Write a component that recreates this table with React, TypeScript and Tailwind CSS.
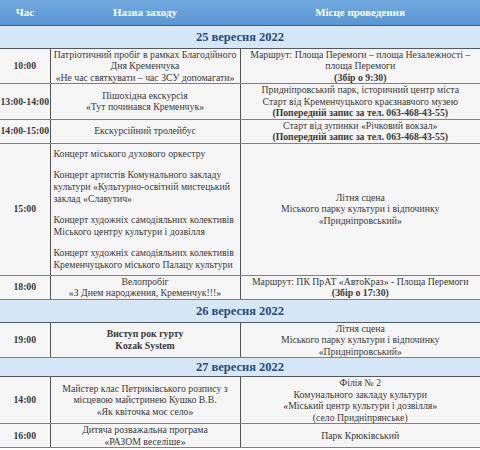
import React from "react";

type Line = string | { b: string };

interface EventRow {
  time: string;
  name: React.ReactNode;
  place: Line[];
  left?: boolean;
}

interface DayBlock {
  date: string;
  h: string;
  rows: EventRow[];
}

function Lines({ lines }: { lines: Line[] }) {
  return (
    <>
      {lines.map((l, i) =>
        typeof l === "string" ? (
          <div key={i}>{l}</div>
        ) : (
          <div key={i} className="font-bold">
            {l.b}
          </div>
        )
      )}
    </>
  );
}

const phone = { b: "(Попередній запис за тел. 063-468-43-55)" };
const summerStage = ["Літня сцена", "Міського парку культури і відпочинку", "«Придніпровський»"];

const days: DayBlock[] = [
  {
    date: "25 вересня 2022",
    h: "h-[23px]",
    rows: [
      {
        time: "10:00",
        name: (
          <Lines
            lines={[
              "Патріотичний пробіг в рамках Благодійного",
              "Дня Кременчука",
              "«Не час святкувати – час ЗСУ допомагати»",
            ]}
          />
        ),
        place: ["Маршрут: Площа Перемоги – площа Незалежності –", "площа Перемоги", { b: "(Збір о 9:30)" }],
      },
      {
        time: "13:00-14:00",
        name: <Lines lines={["Пішохідна екскурсія", "«Тут починався Кременчук»"]} />,
        place: [
          "Придніпровський парк, історичний центр міста",
          "Старт від Кременчуцького краєзнавчого музею",
          phone,
        ],
      },
      {
        time: "14:00-15:00",
        name: <Lines lines={["Екскурсійний тролейбус"]} />,
        place: ["Старт від зупинки «Річковий вокзал»", phone],
      },
      {
        time: "15:00",
        left: true,
        name: (
          <div className="flex flex-col gap-[9px] py-[4px] leading-[12px]">
            <div>Концерт міського духового оркестру</div>
            <div>
              <div>Концерт артистів Комунального закладу</div>
              <div>культури «Культурно-освітній мистецький</div>
              <div>заклад «Славутич»</div>
            </div>
            <div>
              <div>Концерт художніх самодіяльних колективів</div>
              <div>Міського центру культури і дозвілля</div>
            </div>
            <div>
              <div>Концерт художніх самодіяльних колективів</div>
              <div>Кременчуцького міського Палацу культури</div>
            </div>
          </div>
        ),
        place: summerStage,
      },
      {
        time: "18:00",
        name: <Lines lines={["Велопробіг", "«З Днем народження, Кременчук!!!»"]} />,
        place: ["Маршрут: ПК ПрАТ «АвтоКраз» - Площа Перемоги", { b: "(Збір о 17:30)" }],
      },
    ],
  },
  {
    date: "26 вересня 2022",
    h: "h-[23px]",
    rows: [
      {
        time: "19:00",
        name: <Lines lines={[{ b: "Виступ рок гурту" }, { b: "Kozak System" }]} />,
        place: summerStage,
      },
    ],
  },
  {
    date: "27 вересня 2022",
    h: "h-[19px]",
    rows: [
      {
        time: "14:00",
        name: (
          <Lines
            lines={[
              "Майстер клас Петриківського розпису з",
              "місцевою майстринею Кушко В.В.",
              "«Як квіточка моє село»",
            ]}
          />
        ),
        place: [
          "Філія № 2",
          "Комунального закладу культури",
          "«Міський центр культури і дозвілля»",
          "(село Придніпрянське)",
        ],
      },
      {
        time: "16:00",
        name: <Lines lines={["Дитяча розважальна програма", "«РАЗОМ веселіше»"]} />,
        place: ["Парк Крюківський"],
      },
    ],
  },
];

export default function App() {
  return (
    <div className="w-[480px] h-[450px] overflow-hidden bg-white font-['Liberation_Serif',serif] text-[9.75px] leading-[11.5px] text-[#3a3a3a]">
      <table className="w-[480px] table-fixed border-collapse">
        <colgroup>
          <col className="w-[50px]" />
          <col className="w-[190px]" />
          <col className="w-[240px]" />
        </colgroup>
        <thead>
          <tr className="h-[25px] bg-gradient-to-b from-[#70a9de] to-[#5b96d2] text-[11px] font-bold text-white">
            <th>Час</th>
            <th>Назва заходу</th>
            <th>Місце проведення</th>
          </tr>
        </thead>
        <tbody>
          {days.map((d) => (
            <React.Fragment key={d.date}>
              <tr className={`${d.h} bg-[#d5e6f6]`}>
                <td
                  colSpan={3}
                  className="border-y border-[#4e5a66] p-0 text-center text-[12.5px] leading-[14px] font-bold text-[#1f4e79]"
                >
                  {d.date}
                </td>
              </tr>
              {d.rows.map((r) => (
                <tr key={r.time + d.date} className="bg-[#f5f5f5] whitespace-nowrap">
                  <td className="border-b border-r border-b-[#808080] border-r-[#555] p-0 text-center font-bold">
                    {r.time}
                  </td>
                  <td
                    className={`border-b border-r border-b-[#808080] border-r-[#555] p-0 ${
                      r.left ? "pl-[3px] text-left" : "text-center"
                    }`}
                  >
                    {r.name}
                  </td>
                  <td className="border-b border-b-[#808080] p-0 text-center">
                    <Lines lines={r.place} />
                  </td>
                </tr>
              ))}
            </React.Fragment>
          ))}
        </tbody>
      </table>
    </div>
  );
}
